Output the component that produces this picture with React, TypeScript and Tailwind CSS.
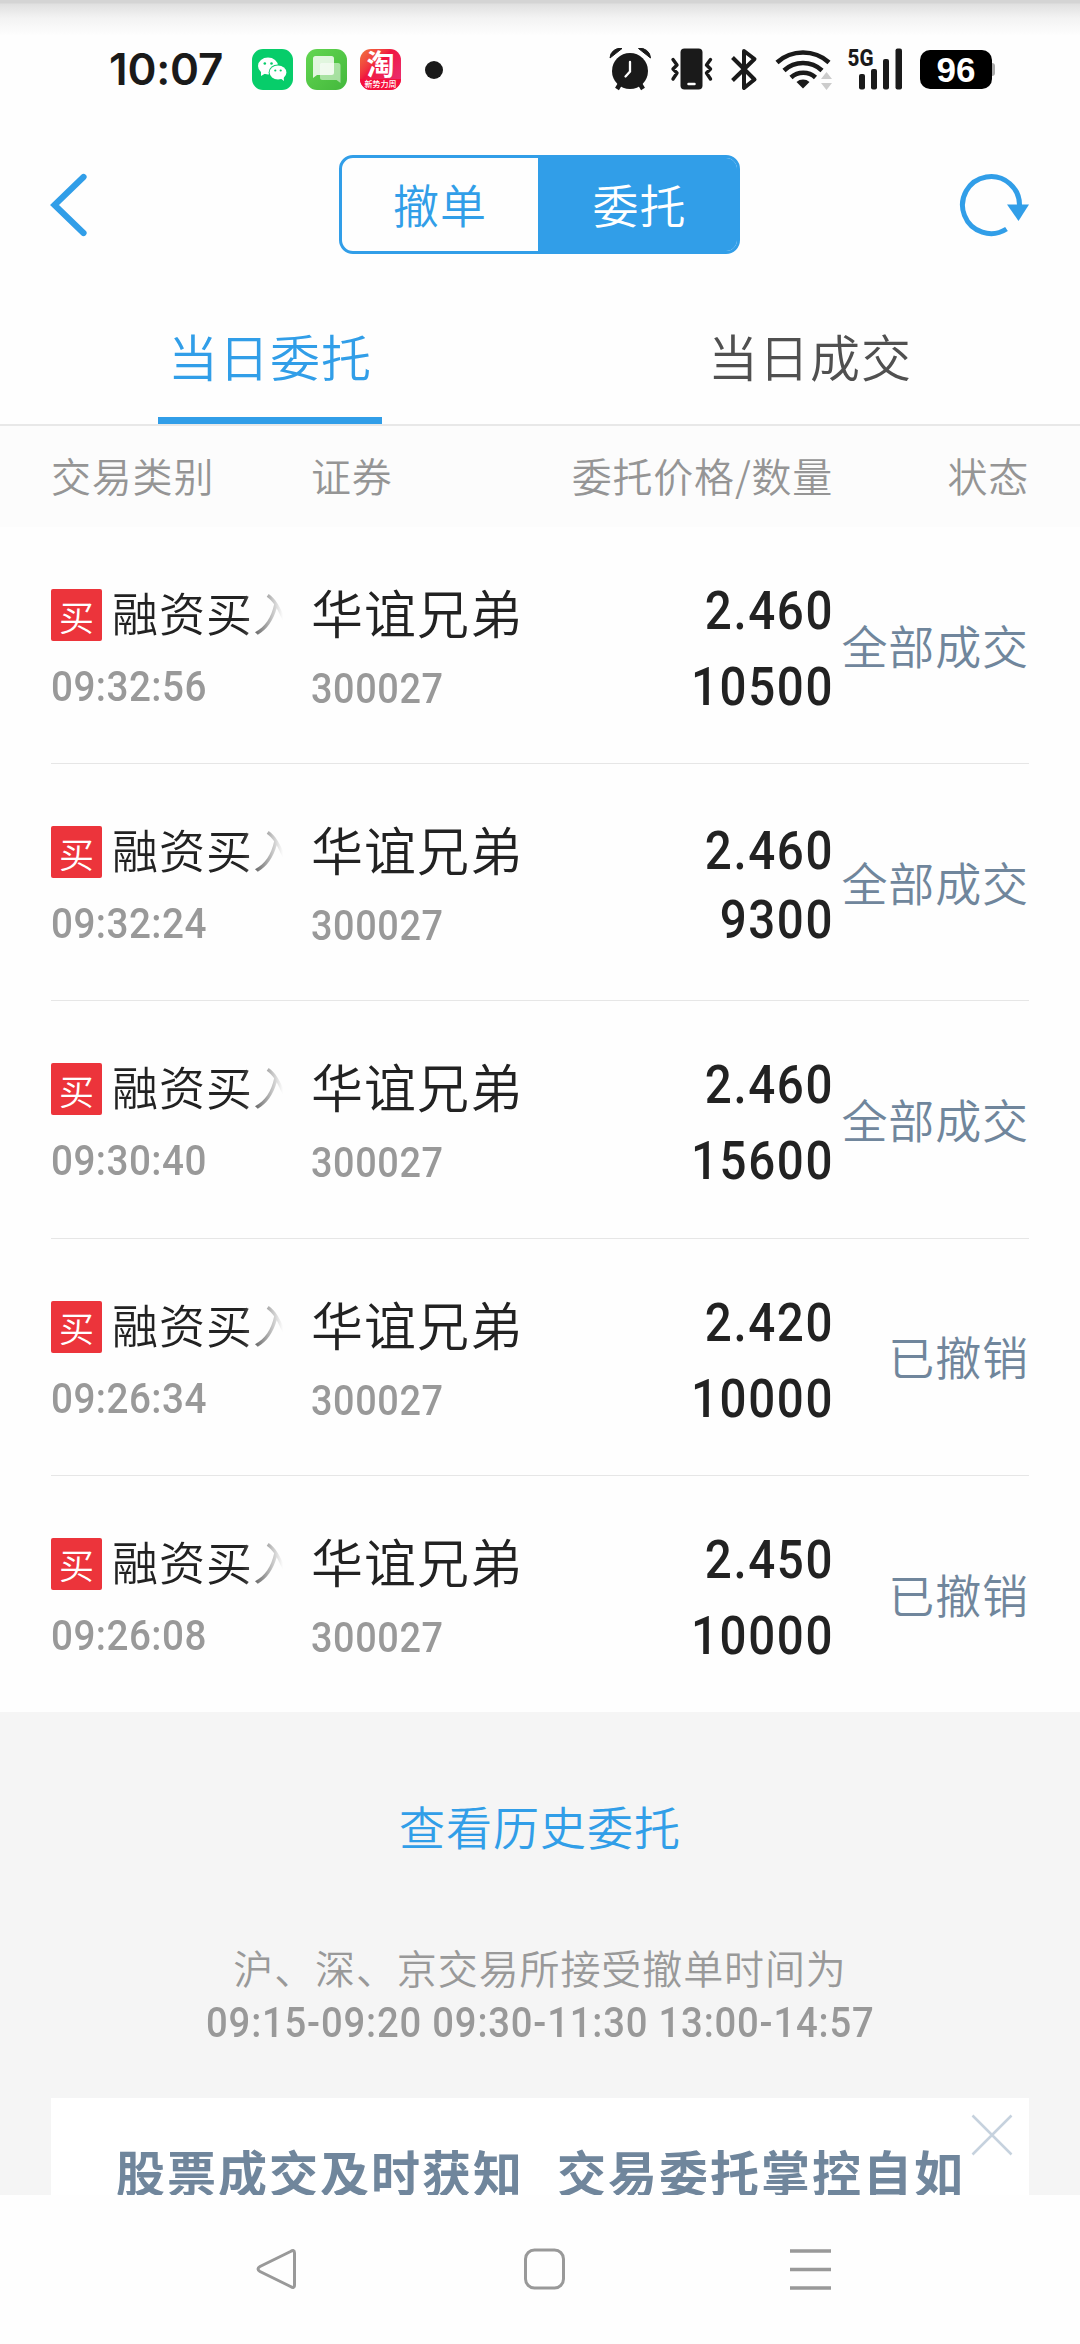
const CJK = "font-['Noto_Sans_CJK_SC','Noto_Sans_CJK_JP',sans-serif]";
const BLUE = "text-[#319ee8]";

type Order = {
  time: string;
  price: string;
  qty: string;
  status: string;
  tight?: boolean;
};

const orders: Order[] = [
  { time: "09:32:56", price: "2.460", qty: "10500", status: "全部成交" },
  { time: "09:32:24", price: "2.460", qty: "9300", status: "全部成交", tight: true },
  { time: "09:30:40", price: "2.460", qty: "15600", status: "全部成交" },
  { time: "09:26:34", price: "2.420", qty: "10000", status: "已撤销" },
  { time: "09:26:08", price: "2.450", qty: "10000", status: "已撤销" },
];

function WeChatIcon() {
  return (
    <svg width="41" height="41" viewBox="0 0 41 41">
      <rect width="41" height="41" rx="11" fill="#07cd6a" />
      <ellipse cx="16" cy="17" rx="10" ry="8.4" fill="#fff" />
      <path d="M9 22l0 5 5-3z" fill="#fff" />
      <ellipse cx="26" cy="23.5" rx="9.4" ry="8" fill="#07cd6a" />
      <ellipse cx="26" cy="23.5" rx="8.4" ry="7" fill="#fff" />
      <path d="M28 29l4 3-.4-5z" fill="#fff" />
      <circle cx="12.8" cy="14.5" r="1.3" fill="#07cd6a" />
      <circle cx="19.5" cy="14.5" r="1.3" fill="#07cd6a" />
      <circle cx="23.3" cy="21.5" r="1.1" fill="#07cd6a" />
      <circle cx="28.7" cy="21.5" r="1.1" fill="#07cd6a" />
    </svg>
  );
}

function MessagesIcon() {
  return (
    <svg width="41" height="41" viewBox="0 0 41 41">
      <defs>
        <linearGradient id="msg" x1="0" y1="0" x2="1" y2="1">
          <stop offset="0" stopColor="#63d651" />
          <stop offset="1" stopColor="#43b83c" />
        </linearGradient>
      </defs>
      <rect width="41" height="41" rx="11" fill="url(#msg)" />
      <path d="M15 14h17q2.500 0 2.500 2.500v17.500l-4-3H16.500q-2.500 0-2.500-2.500V15z" fill="#fff" opacity=".5" />
      <path d="M9.500 7h16q2.500 0 2.500 2.500v14q0 2.500-2.500 2.500H11l-4 3V9.500q0-2.500 2.500-2.500z" fill="#fff" opacity=".82" />
    </svg>
  );
}

function TaobaoIcon() {
  return (
    <div className={`${CJK} flex h-[41px] w-[41px] flex-col rounded-[11px] bg-linear-to-br from-[#f0703c] via-[#f0153f] via-40% to-[#e8307a] text-center whitespace-nowrap text-white`}>
      <div className="h-[30px] text-[28px] leading-[29px] font-bold">淘</div>
      <div className="flex h-[11px] justify-center rounded-b-[11px] bg-[#f5103c] text-[8px] leading-[9px] font-medium">新势力周</div>
    </div>
  );
}

function StatusBar() {
  return (
    <div className="flex h-[140px] items-start bg-[linear-gradient(to_bottom,#d4d4d4_0px,#d4d4d4_3px,#e0e0e0_4px,#f3f3f3_18px,#fefefe_36px)] pl-[109px]">
      <div className="mt-[46px] w-[143px] font-['Inter',sans-serif] text-[44px] leading-[46px] font-semibold tracking-[-0.2px] text-[#1a1a1a]">10:07</div>
      <div className="mt-[49px] flex items-center gap-[13px]">
        <WeChatIcon />
        <MessagesIcon />
        <TaobaoIcon />
      </div>
      <div className="mt-[61px] ml-[24px] h-[18px] w-[18px] rounded-full bg-[#1a1a1a]" />
      <svg className="mt-[44px] ml-[163px]" width="308" height="50" viewBox="606 44 308 50" fill="#1a1a1a">
        <circle cx="630" cy="71" r="18" />
        <path d="M610 58a10 10 0 0 1 12-9.500zM650.500 58a10 10 0 0 0-12-9.500z" strokeLinejoin="round" stroke="#1a1a1a" strokeWidth="1" />
        <path d="M620 84l-3 5M640 84l3 5" stroke="#1a1a1a" strokeWidth="4.500" />
        <path d="M630 62v9.500l-4.500 5" fill="none" stroke="#fff" strokeWidth="2.300" strokeLinecap="round" />
        <rect x="680.500" y="48.500" width="22" height="41" rx="4" />
        <path d="M688.500 84h6" stroke="#fff" strokeWidth="2.500" strokeLinecap="round" />
        <path d="M673 59.500l4 5.500-4 4 4 4-4 6M710.500 59.500l-4 5.500 4 4-4 4 4 6" fill="none" stroke="#1a1a1a" strokeWidth="3.400" strokeLinecap="round" strokeLinejoin="round" />
        <path d="M732.500 57.500L754.500 79.500 744 88V51l10.500 8L732.500 80.500" fill="none" stroke="#1a1a1a" strokeWidth="4" strokeLinejoin="round" />
        <path d="M777 62.500a39 39 0 0 1 52 0M784 70.500a28 28 0 0 1 38 0M791 77.500a18 18 0 0 1 24.500 0" fill="none" stroke="#1a1a1a" strokeWidth="4.600" />
        <path d="M796.500 82a10 10 0 0 1 13 0l-6.500 6.500z" />
        <path d="M821 79l5.500-7 5.500 7zM821 83h11l-5.500 7z" fill="#ccc" />
        <rect x="859" y="74" width="6" height="15.500" rx="2" />
        <rect x="871" y="69" width="6" height="20.500" rx="2" />
        <rect x="883" y="59" width="6" height="30.500" rx="2" />
        <rect x="895.500" y="48.500" width="6.500" height="41" rx="2" />
        <text x="847.500" y="65.500" fontFamily="Roboto, sans-serif" fontWeight="800" fontSize="24" textLength="26" lengthAdjust="spacingAndGlyphs">5G</text>
      </svg>
      <div className="mt-[50px] ml-[6px] flex h-[39px] w-[72px] items-center justify-center rounded-[10px] bg-black font-['Liberation_Sans',sans-serif] text-[35px] leading-none font-bold text-white">96</div>
      <div className="mt-[63px] h-[13px] w-[3px] rounded-r-[3px] bg-[#aaa]" />
    </div>
  );
}

function TitleBar() {
  return (
    <div className={`flex h-[130px] items-start justify-between pr-[48px] pl-[50px] ${BLUE}`}>
      <svg className="mt-[32px]" width="40" height="66" viewBox="50 172 40 66">
        <path d="M83.500 177L54.500 205l29 28" fill="none" stroke="currentColor" strokeWidth="6.200" strokeLinecap="round" />
      </svg>
      <div className={`${CJK} mt-[15px] ml-[31px] flex h-[99px] w-[401px] overflow-hidden rounded-[14px] border-[3px] border-[#319ee8] text-[46px] leading-none font-[350] tracking-[1px]`}>
        <div className="flex flex-1 items-center justify-center pb-[4px]">撤单</div>
        <div className="flex w-[199px] items-center justify-center bg-[#319ee8] pb-[4px] pl-[4px] text-white">委托</div>
      </div>
      <svg className="mt-[30px]" width="74" height="70" viewBox="958 170 74 70">
        <path d="M1019.500 206A28.500 28.500 0 1 0 1006.500 229" fill="none" stroke="currentColor" strokeWidth="5" />
        <path d="M1007 204.500h22l-10.500 16.500z" fill="currentColor" />
      </svg>
    </div>
  );
}

function Tabs() {
  return (
    <div className={`${CJK} flex h-[156px] border-b-2 border-[#e8e8e8] text-[50px] leading-none font-[350] tracking-[1px]`}>
      <div className={`flex w-1/2 flex-col items-center ${BLUE}`}>
        <div className="mt-[60px]">当日委托</div>
        <div className="mt-auto h-[7px] w-[224px] bg-[#319ee8]" />
      </div>
      <div className="w-1/2 pt-[60px] text-center text-[#505050]">当日成交</div>
    </div>
  );
}

function ColumnHeads() {
  return (
    <div className={`${CJK} flex h-[101px] items-start bg-[#fcfcfc] px-[51px] pt-[29px] text-[40px] leading-none font-[350] tracking-[0.8px] text-[#959595]`}>
      <div className="w-[260px]">交易类别</div>
      <div className="w-[200px]">证券</div>
      <div className="w-[322px] text-right">委托价格/数量</div>
      <div className="flex-1 text-right">状态</div>
    </div>
  );
}

function OrderRow({ order, last }: { order: Order; last: boolean }) {
  return (
    <div className={`mx-[51px] flex h-[237.200px] ${last ? "" : "border-b border-[#e6e6e6]"}`}>
      <div className="w-[260px]">
        <div className="mt-[62px] flex w-[232px] items-start">
          <div className={`${CJK} flex h-[52px] w-[51px] shrink-0 items-center justify-center rounded-[2px] bg-[#ec343b] text-[35px] leading-none font-[350] text-white`}>买</div>
          <div className={`${CJK} ml-[10px] h-[52px] w-[171px] shrink-0 overflow-hidden mask-r-from-76% mask-r-to-100% text-[46px] leading-[44px] font-[350] tracking-[1px] whitespace-nowrap text-[#222]`}>融资买入</div>
        </div>
        <div className="mt-[25px] origin-left scale-x-92 font-['Roboto',sans-serif] text-[42px] leading-[42px] font-medium tracking-[0.500px] text-[#999]">{order.time}</div>
      </div>
      <div className="w-[220px]">
        <div className={`${CJK} mt-[59px] text-[52px] leading-[52px] font-[350] tracking-[1px] whitespace-nowrap text-[#222]`}>华谊兄弟</div>
        <div className="mt-[30px] origin-left scale-x-90 font-['Roboto',sans-serif] text-[42px] leading-[42px] font-medium tracking-[0.7px] text-[#999]">300027</div>
      </div>
      <div className={`flex w-[303px] origin-right scale-x-88 flex-col items-end font-['Roboto',sans-serif] text-[54px] leading-[54px] font-medium tracking-[1.800px] text-[#222] ${order.tight ? "gap-[15px] pt-[60px]" : "gap-[22px] pt-[57px]"}`}>
        <div>{order.price}</div>
        <div>{order.qty}</div>
      </div>
      <div className={`${CJK} flex w-[195px] items-center justify-end pb-[3px] text-[46px] leading-none font-[350] tracking-[0.900px] whitespace-nowrap text-[#70869c]`}>{order.status}</div>
    </div>
  );
}

function Footer() {
  return (
    <div className="flex h-[483px] flex-col items-center overflow-hidden bg-[#f5f5f5] text-[#999]">
      <div className={`${CJK} mt-[90px] text-[46px] leading-[46px] font-[350] tracking-[1px] ${BLUE}`}>查看历史委托</div>
      <div className={`${CJK} mt-[99px] text-[40px] leading-[40px] font-[350] tracking-[0.9px]`}>沪、深、京交易所接受撤单时间为</div>
      <div className="mt-[15px] scale-x-91 font-['Roboto',sans-serif] text-[42px] leading-[42px] font-medium tracking-[0.900px] whitespace-nowrap">09:15-09:20 09:30-11:30 13:00-14:57</div>
      <div className="relative mt-auto flex h-[97px] w-[978px] shrink-0 overflow-hidden bg-white pt-[46px] pl-[65px]">
        <div className={`${CJK} flex gap-[33px] text-[49px] leading-[54px] font-bold tracking-[2px] whitespace-nowrap text-[#70869c]`}>
          <span>股票成交及时获知</span>
          <span>交易委托掌控自如</span>
        </div>
        <svg className="absolute top-[16px] right-[16px]" width="42" height="42" viewBox="0 0 42 42">
          <path d="M1.500 1.500l39 39M40.500 1.500l-39 39" stroke="#c6d2de" strokeWidth="2.500" />
        </svg>
      </div>
    </div>
  );
}

function NavBar() {
  return (
    <div className="flex h-[149px] items-start gap-[223px] bg-[#fefefe] pt-[52px] pl-[254px]">
      <svg width="44" height="44" viewBox="254 2247 44 44" fill="none" stroke="#999" strokeWidth="3">
        <path d="M294.500 2253v32q0 4-4 1.500L260 2271.500q-4-2.500 0-5L290.500 2251.500q4-2.500 4 1.500z" />
      </svg>
      <svg width="44" height="44" viewBox="0 0 44 44" fill="none" stroke="#999" strokeWidth="3">
        <rect x="4.500" y="3" width="38" height="38" rx="9" />
      </svg>
      <svg width="44" height="44" viewBox="0 0 44 44" stroke="#999" strokeWidth="3.500">
        <path d="M2 4h41M2 22.500h41M2 41h41" />
      </svg>
    </div>
  );
}

export default function App() {
  return (
    <div className="h-[2344px] w-[1080px] overflow-hidden bg-[#fefefe]">
      <StatusBar />
      <TitleBar />
      <Tabs />
      <ColumnHeads />
      <div className="h-[1185px]">
        {orders.map((order, i) => (
          <OrderRow key={order.time} order={order} last={i === orders.length - 1} />
        ))}
      </div>
      <Footer />
      <NavBar />
    </div>
  );
}
